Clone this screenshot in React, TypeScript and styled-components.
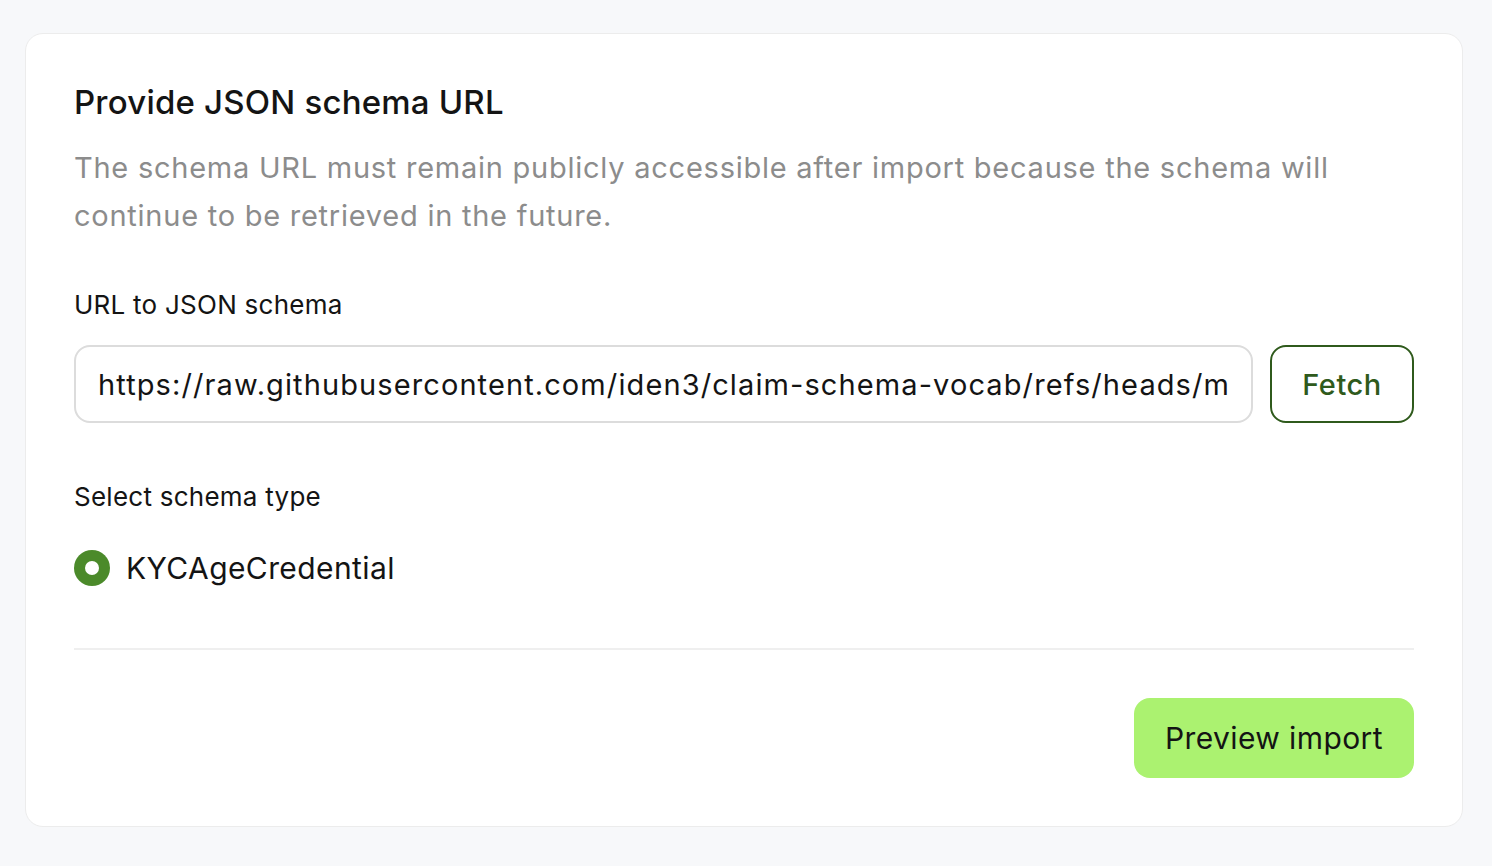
import styled, { createGlobalStyle } from "styled-components"

const GlobalStyle = createGlobalStyle`
    body {
        margin: 0;
        background: #f7f8fa;
        font-family: Inter, "Noto Sans", sans-serif;
        color: #141414;
    }
`

export default function App() {
    return (
        <Page>
            <GlobalStyle />
            <Card>
                <Title>Provide JSON schema URL</Title>
                <Desc>
                    The schema URL must remain publicly accessible after import because the schema will
                    continue to be retrieved in the future.
                </Desc>

                <Label>URL to JSON schema</Label>
                <InputRow>
                    <UrlInput
                        readOnly
                        value="https://raw.githubusercontent.com/iden3/claim-schema-vocab/refs/heads/main/schemas/json/KYCAgeCredential-v3.json"
                    />
                    <OutlineButton>Fetch</OutlineButton>
                </InputRow>

                <Label $top={56}>Select schema type</Label>
                <RadioRow>
                    <Radio />
                    <RadioLabel>KYCAgeCredential</RadioLabel>
                </RadioRow>

                <Divider />

                <Footer>
                    <PrimaryButton>Preview import</PrimaryButton>
                </Footer>
            </Card>
        </Page>
    )
}

const Page = styled.div`
    padding: 33px 29px 39px 25px;
`

const Card = styled.div`
    background: #fff;
    border: 1px solid #ececec;
    border-radius: 18px;
    padding: 48px;
    display: flex;
    flex-direction: column;
`

const Title = styled.h1`
    margin: 0;
    font-size: 33px;
    font-weight: 500;
    line-height: 40px;
    letter-spacing: 0.2px;
`

const Desc = styled.p`
    margin: 22px 0 0;
    max-width: 1280px;
    font-size: 29px;
    line-height: 48px;
    color: #8c8c8c;
    letter-spacing: 0.75px;
`

const Label = styled.div<{ $top?: number }>`
    margin-top: ${(p) => p.$top ?? 47}px;
    font-size: 26px;
    line-height: 36px;
    font-weight: 400;
    letter-spacing: 0.25px;
`

const InputRow = styled.div`
    display: flex;
    gap: 17px;
    margin-top: 22px;
`

const UrlInput = styled.input`
    flex: 1;
    min-width: 0;
    height: 78px;
    box-sizing: border-box;
    border: 2px solid #dcdcdc;
    border-radius: 16px;
    padding: 0 22px;
    font-family: inherit;
    font-size: 29px;
    letter-spacing: 1.1px;
    color: #141414;
    outline: none;
    background: #fff;
`

const OutlineButton = styled.button`
    width: 144px;
    height: 78px;
    border: 2px solid #2f5a1c;
    border-radius: 16px;
    background: #fff;
    color: #2f5a1c;
    font-family: inherit;
    font-size: 29px;
    font-weight: 500;
    letter-spacing: 0.5px;
    cursor: pointer;
`

const RadioRow = styled.div`
    display: flex;
    align-items: center;
    gap: 16px;
    margin-top: 35px;
`

const Radio = styled.span`
    width: 36px;
    height: 36px;
    border-radius: 50%;
    background: #4b8a2a;
    display: flex;
    align-items: center;
    justify-content: center;

    &::after {
        content: "";
        width: 14px;
        height: 14px;
        border-radius: 50%;
        background: #fff;
    }
`

const RadioLabel = styled.span`
    font-size: 30px;
    line-height: 36px;
    letter-spacing: 0.4px;
`

const Divider = styled.hr`
    margin: 62px 0 0;
    border: none;
    border-top: 2px solid #efefef;
`

const Footer = styled.div`
    display: flex;
    justify-content: flex-end;
    margin-top: 48px;
`

const PrimaryButton = styled.button`
    height: 80px;
    padding: 0 31px;
    border: none;
    border-radius: 16px;
    background: #abf270;
    color: #141414;
    font-family: inherit;
    font-size: 30px;
    font-weight: 400;
    letter-spacing: 0.4px;
    cursor: pointer;
`
